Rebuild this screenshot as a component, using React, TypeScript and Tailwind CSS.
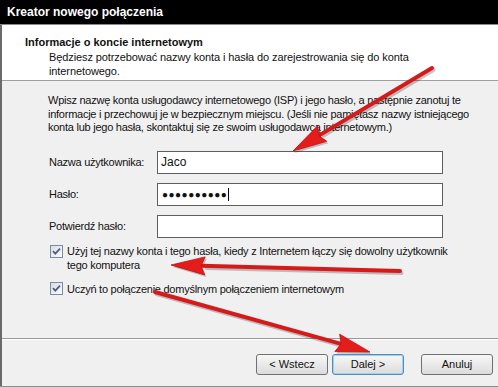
import React from "react";

function Check() {
  return (
    <span className="flex h-[13px] w-[13px] shrink-0 items-center justify-center border border-[#7b8aa6] bg-gradient-to-br from-[#dcdcdc] to-[#fbfbfb]">
      <svg width="9" height="9" viewBox="0 0 9 9">
        <path d="M1 4.2 L3.3 6.6 L8 1.6" fill="none" stroke="#4b5d8c" strokeWidth="1.8" />
      </svg>
    </span>
  );
}

function Btn({ label, focus }: { label: string; focus?: boolean }) {
  return (
    <div
      className={
        "flex h-[21px] w-[72px] items-center justify-center rounded-[3px] border bg-gradient-to-b from-[#f7f7f7] to-[#dcdcdc] text-[11px] text-[#111] " +
        (focus ? "border-[#4f8fbf] shadow-[inset_0_0_0_1px_#9fd0ef]" : "border-[#707070]")
      }
    >
      {label}
    </div>
  );
}

function Arrows() {
  const arrows = [
    { x1: 432, y1: 68, tip: [293, 151] },
    { x1: 400, y1: 271, tip: [171, 265] },
    { x1: 155, y1: 292, tip: [370, 352] },
  ];
  return (
    <svg className="pointer-events-none absolute left-0 top-0" width="498" height="387" viewBox="0 0 498 387">
      {arrows.map((a, i) => {
        const [tx, ty] = a.tip;
        const dx = tx - a.x1;
        const dy = ty - a.y1;
        const len = Math.hypot(dx, dy);
        const ux = dx / len;
        const uy = dy / len;
        const hl = 34;
        const hw = 9;
        const bx = tx - ux * hl;
        const by = ty - uy * hl;
        const px = -uy;
        const py = ux;
        const head = `${tx},${ty} ${bx + px * hw},${by + py * hw} ${bx + ux * 4},${by + uy * 4} ${bx - px * hw},${by - py * hw}`;
        return (
          <g key={i}>
            <g transform="translate(1.5,2)" opacity="0.22">
              <line x1={a.x1} y1={a.y1} x2={bx} y2={by} stroke="#000" strokeWidth="4" strokeLinecap="round" />
              <polygon points={head} fill="#000" />
            </g>
            <line x1={a.x1} y1={a.y1} x2={bx + ux * 4} y2={by + uy * 4} stroke="#d61a1a" strokeWidth="4" strokeLinecap="round" />
            <polygon points={head} fill="#e41c1c" stroke="#c01010" strokeWidth="0.8" />
          </g>
        );
      })}
    </svg>
  );
}

export default function App() {
  return (
    <div className="relative h-[387px] w-[498px] overflow-hidden whitespace-nowrap bg-[#f0f0f0] font-['Liberation_Sans',Arial,sans-serif] text-[11px] tracking-[-0.25px] text-[#111]">
      <div className="flex h-full flex-col">
        <div className="flex h-[25px] shrink-0 items-center border-b border-[#8a8a8a] bg-black pl-[7px] text-[12px] font-bold tracking-normal text-white">
          Kreator nowego połączenia
        </div>
        <div className="flex flex-1 border-b border-[#8c8c8c]">
          <div className="w-[2px] shrink-0 bg-[#6a6a6a]" />
          <div className="flex flex-1 flex-col">
            <div className="h-[56px] shrink-0 border-b border-[#a0a0a0] bg-white pl-[23px] pt-[11px]">
              <div className="text-[11px] font-bold leading-[13px] tracking-normal">Informacje o koncie internetowym</div>
              <div className="mt-[1px] pl-[24px] leading-[14px] tracking-[-0.1px]">
                Będziesz potrzebować nazwy konta i hasła do zarejestrowania się do konta
                <br />
                internetowego.
              </div>
            </div>
            <div className="flex flex-1 flex-col border-b border-[#9a9a9a] pl-[46px] pr-[20px] pt-[13px]">
              <p className="leading-[13.5px]">
                Wpisz nazwę konta usługodawcy internetowego (ISP) i jego hasło, a następnie zanotuj te
                <br />
                informacje i przechowuj je w bezpiecznym miejscu. (Jeśli nie pamiętasz nazwy istniejącego
                <br />
                konta lub jego hasła, skontaktuj się ze swoim usługodawcą internetowym.)
              </p>
              <div className="mt-[16px] flex flex-col gap-[9px]">
                <div className="flex items-center">
                  <span className="w-[109px] pl-[1px]">Nazwa użytkownika:</span>
                  <div className="flex h-[23px] w-[286px] items-center border border-[#5e5e5e] bg-white pl-[3px] text-[12px] tracking-normal">Jaco</div>
                </div>
                <div className="flex items-center">
                  <span className="w-[109px] pl-[1px]">Hasło:</span>
                  <div className="flex h-[23px] w-[286px] items-center border border-[#5e5e5e] bg-white pl-[4px]">
                    <span className="text-[10px] tracking-[0.5px]">●●●●●●●●●●</span>
                    <span className="ml-[1px] h-[13px] w-[1px] bg-black" />
                  </div>
                </div>
                <div className="flex items-center">
                  <span className="w-[109px] pl-[1px]">Potwierdź hasło:</span>
                  <div className="h-[23px] w-[286px] border border-[#5e5e5e] bg-white" />
                </div>
              </div>
              <div className="mt-[6px] flex items-start gap-[4px] pl-[2px]">
                <div className="pt-[1px]"><Check /></div>
                <span className="leading-[14px]">
                  Użyj tej nazwy konta i tego hasła, kiedy z Internetem łączy się dowolny użytkownik
                  <br />
                  tego komputera
                </span>
              </div>
              <div className="mt-[9px] flex items-center gap-[4px] pl-[2px]">
                <Check />
                <span>Uczyń to połączenie domyślnym połączeniem internetowym</span>
              </div>
            </div>
            <div className="flex h-[47px] shrink-0 items-start gap-[4px] border-t border-white pl-[254px] pt-[14px] tracking-normal">
              <Btn label="< Wstecz" />
              <Btn label="Dalej >" focus />
              <div className="w-[9px]" />
              <Btn label="Anuluj" />
            </div>
          </div>
        </div>
      </div>
      <Arrows />
    </div>
  );
}
